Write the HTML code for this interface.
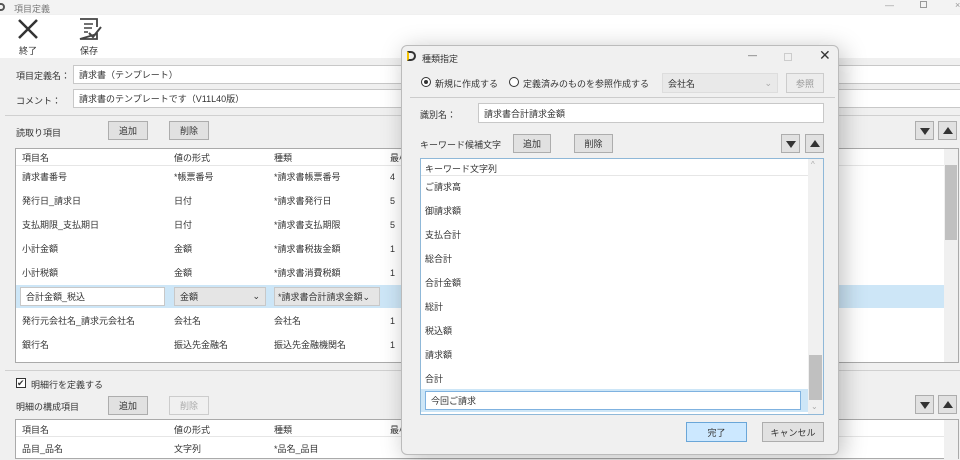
<!DOCTYPE html>
<html><head><meta charset="utf-8"><style>
*{box-sizing:border-box;margin:0;padding:0}
body{width:960px;height:450px;overflow:hidden;background:#f0f0f0;font-family:"Liberation Sans","Noto Sans CJK JP",sans-serif;font-size:9px;color:#333;position:relative}
.a{position:absolute;white-space:nowrap}
.inp{position:absolute;background:#fff;border:1px solid #c8c8c8;padding:0 5px;display:flex;align-items:center}
.btn{position:absolute;background:#e1e1e1;border:1px solid #adadad;display:flex;align-items:center;justify-content:center}
.tri{position:absolute;background:#e1e1e1;border:1px solid #adadad;width:19px;height:19px}
.dn:after{content:"";position:absolute;left:4px;top:6px;border-left:5px solid transparent;border-right:5px solid transparent;border-top:7px solid #333}
.up:after{content:"";position:absolute;left:4px;top:5px;border-left:5px solid transparent;border-right:5px solid transparent;border-bottom:7px solid #333}
.hl{position:absolute;height:1px;background:#d0d0d0}
</style></head><body>
<div class="a" style="left:0;top:0;width:960px;height:14px;background:#f3f3f3"></div>
<div class="a" style="left:-3px;top:3px;width:8px;height:8px;border:2px solid #555;border-radius:0 4px 4px 0"></div>
<div class="a" style="left:14px;top:2px;color:#777">項目定義</div>
<div class="a" style="left:885px;top:0;color:#999">—</div>
<div class="a" style="left:920px;top:1px;width:7px;height:7px;border:1px solid #999"></div>
<div class="a" style="left:955px;top:0;color:#999">×</div>
<div class="a" style="left:0;top:15px;width:960px;height:43px;background:#fff"></div>
<svg class="a" style="left:16px;top:17px" width="24" height="24"><path d="M3 3L21 21M21 3L3 21" stroke="#333" stroke-width="2.5"/></svg>
<div class="a" style="left:19px;top:44px">終了</div>
<svg class="a" style="left:77px;top:16px" width="26" height="26"><path d="M3 3H20V11M20 18V23H3Z" fill="none" stroke="#444" stroke-width="1.8"/><path d="M7 8H16M7 12H15M7 16H11" stroke="#444" stroke-width="1.5"/><path d="M12 17L16 21L24 11" fill="none" stroke="#444" stroke-width="2"/></svg>
<div class="a" style="left:80px;top:44px">保存</div>
<div class="a" style="left:16px;top:69px">項目定義名：</div>
<div class="inp" style="left:73px;top:65px;width:900px;height:19px">請求書（テンプレート）</div>
<div class="a" style="left:16px;top:94px">コメント：</div>
<div class="inp" style="left:73px;top:89px;width:900px;height:19px">請求書のテンプレートです（V11L40版）</div>
<div class="hl" style="left:5px;top:115px;width:955px"></div>
<div class="a" style="left:16px;top:126px">読取り項目</div>
<div class="btn" style="left:108px;top:121px;width:40px;height:19px">追加</div>
<div class="btn" style="left:169px;top:121px;width:40px;height:19px">削除</div>
<div class="tri dn" style="left:915px;top:121px"></div>
<div class="tri up" style="left:938px;top:121px"></div>
<div class="a" style="left:15px;top:148px;width:944px;height:215px;background:#fff;border:1px solid #aaa"></div>
<div class="a" style="left:944px;top:149px;width:14px;height:213px;background:#f0f0f0"></div>
<div class="a" style="left:945px;top:165px;width:12px;height:75px;background:#c0c0c0"></div>
<div class="hl" style="left:16px;top:165px;width:928px;background:#e6e6e6"></div>
<div class="a" style="left:16px;top:285px;width:928px;height:23px;background:#cde6f7"></div>
<div class="a" style="left:22px;top:151px">項目名</div><div class="a" style="left:174px;top:151px">値の形式</div><div class="a" style="left:274px;top:151px">種類</div><div class="a" style="left:390px;top:151px">最小</div>
<div class="a" style="left:22px;top:171px;line-height:12px">請求書番号<br><br>発行日_請求日<br><br>支払期限_支払期日<br><br>小計金額<br><br>小計税額<br><br><br><br>発行元会社名_請求元会社名<br><br>銀行名</div>
<div class="a" style="left:174px;top:171px;line-height:12px">*帳票番号<br><br>日付<br><br>日付<br><br>金額<br><br>金額<br><br><br><br>会社名<br><br>振込先金融名</div>
<div class="a" style="left:274px;top:171px;line-height:12px">*請求書帳票番号<br><br>*請求書発行日<br><br>*請求書支払期限<br><br>*請求書税抜金額<br><br>*請求書消費税額<br><br><br><br>会社名<br><br>振込先金融機関名</div>
<div class="a" style="left:390px;top:171px;line-height:12px">4<br><br>5<br><br>5<br><br>1<br><br>1<br><br><br><br>1<br><br>1</div>
<div class="inp" style="left:20px;top:287px;width:145px;height:19px">合計金額_税込</div>
<div class="inp" style="left:174px;top:287px;width:92px;height:19px;background:#e5e5e5">金額<span style="margin-left:auto">⌄</span></div>
<div class="inp" style="left:274px;top:287px;width:106px;height:19px;background:#e5e5e5;padding:0 3px">*請求書合計請求金額⌄</div>
<div class="hl" style="left:5px;top:370px;width:955px"></div>
<div class="a" style="left:16px;top:378px;width:10px;height:10px;border:1px solid #333;background:#fff;font-size:9px;line-height:8px">✔</div>
<div class="a" style="left:31px;top:378px">明細行を定義する</div>
<div class="a" style="left:16px;top:400px">明細の構成項目</div>
<div class="btn" style="left:108px;top:396px;width:40px;height:19px">追加</div>
<div class="btn" style="left:169px;top:396px;width:40px;height:19px;background:#f0f0f0;border-color:#ccc;color:#aaa">削除</div>
<div class="tri dn" style="left:915px;top:395px"></div>
<div class="tri up" style="left:938px;top:395px"></div>
<div class="a" style="left:15px;top:419px;width:944px;height:40px;background:#fff;border:1px solid #aaa"></div>
<div class="a" style="left:944px;top:420px;width:14px;height:40px;background:#f0f0f0"></div>
<div class="hl" style="left:16px;top:436px;width:928px;background:#e6e6e6"></div>
<div class="a" style="left:22px;top:423px">項目名</div><div class="a" style="left:174px;top:423px">値の形式</div><div class="a" style="left:274px;top:423px">種類</div><div class="a" style="left:390px;top:423px">最小</div>
<div class="a" style="left:22px;top:442px">品目_品名</div><div class="a" style="left:174px;top:442px">文字列</div><div class="a" style="left:274px;top:442px">*品名_品目</div>

<!-- dialog -->
<div class="a" style="left:401px;top:45px;width:438px;height:410px;background:#f0f0f0;border:1px solid #bbb;border-radius:6px;box-shadow:4px 4px 24px rgba(0,0,0,.25)"></div>
<div class="a" style="left:407px;top:51px;width:9px;height:10px;border:2.5px solid #333;border-left-color:#f5c400;border-radius:0 5px 5px 0"></div>
<div class="a" style="left:422px;top:52px">種類指定</div>
<div class="a" style="left:748px;top:50px;color:#555">—</div>
<div class="a" style="left:784px;top:53px;width:8px;height:8px;border:1px solid #ccc"></div>
<div class="a" style="left:819px;top:47px;font-size:14px;color:#333">✕</div>
<div class="a" style="left:421px;top:77px;width:10px;height:10px;border:1px solid #333;border-radius:50%;background:#fff"></div>
<div class="a" style="left:424px;top:80px;width:4px;height:4px;border-radius:50%;background:#333"></div>
<div class="a" style="left:435px;top:77px">新規に作成する</div>
<div class="a" style="left:509px;top:77px;width:10px;height:10px;border:1px solid #333;border-radius:50%;background:#fff"></div>
<div class="a" style="left:523px;top:77px">定義済みのものを参照作成する</div>
<div class="inp" style="left:662px;top:73px;width:116px;height:20px;background:#e9e9e9;border-color:#ddd">会社名<span style="margin-left:auto;color:#aaa">⌄</span></div>
<div class="btn" style="left:786px;top:73px;width:38px;height:20px;background:#ececec;border-color:#ccc;color:#999">参照</div>
<div class="hl" style="left:410px;top:97px;width:425px;background:#ccc"></div>
<div class="a" style="left:420px;top:108px">識別名：</div>
<div class="inp" style="left:478px;top:103px;width:346px;height:20px">請求書合計請求金額</div>
<div class="a" style="left:420px;top:138px">キーワード候補文字</div>
<div class="btn" style="left:513px;top:134px;width:38px;height:19px">追加</div>
<div class="btn" style="left:574px;top:134px;width:39px;height:19px">削除</div>
<div class="tri dn" style="left:781px;top:134px"></div>
<div class="tri up" style="left:805px;top:134px"></div>
<div class="a" style="left:420px;top:158px;width:404px;height:257px;background:#fff;border:1px solid #8fb8d8"></div>
<div class="hl" style="left:421px;top:175px;width:387px;background:#e6e6e6"></div>
<div class="a" style="left:808px;top:159px;width:15px;height:255px;background:#f0f0f0"></div>
<div class="a" style="left:809px;top:355px;width:13px;height:45px;background:#c0c0c0"></div>
<div class="a" style="left:811px;top:160px;color:#aaa;font-size:8px">^</div>
<div class="a" style="left:811px;top:402px;color:#aaa;font-size:8px">⌄</div>
<div class="a" style="left:425px;top:162px">キーワード文字列</div>
<div class="a" style="left:425px;top:181px;line-height:12px">ご請求高<br><br>御請求額<br><br>支払合計<br><br>総合計<br><br>合計金額<br><br>総計<br><br>税込額<br><br>請求額<br><br>合計</div>
<div class="a" style="left:421px;top:389px;width:387px;height:23px;background:#cde6f7"></div>
<div class="inp" style="left:425px;top:391px;width:376px;height:19px;border-color:#7fb2e0">今回ご請求</div>
<div class="btn" style="left:686px;top:422px;width:61px;height:20px;background:#cce8ff;border-color:#6aa6d8">完了</div>
<div class="btn" style="left:762px;top:422px;width:62px;height:20px">キャンセル</div>
</body></html>
